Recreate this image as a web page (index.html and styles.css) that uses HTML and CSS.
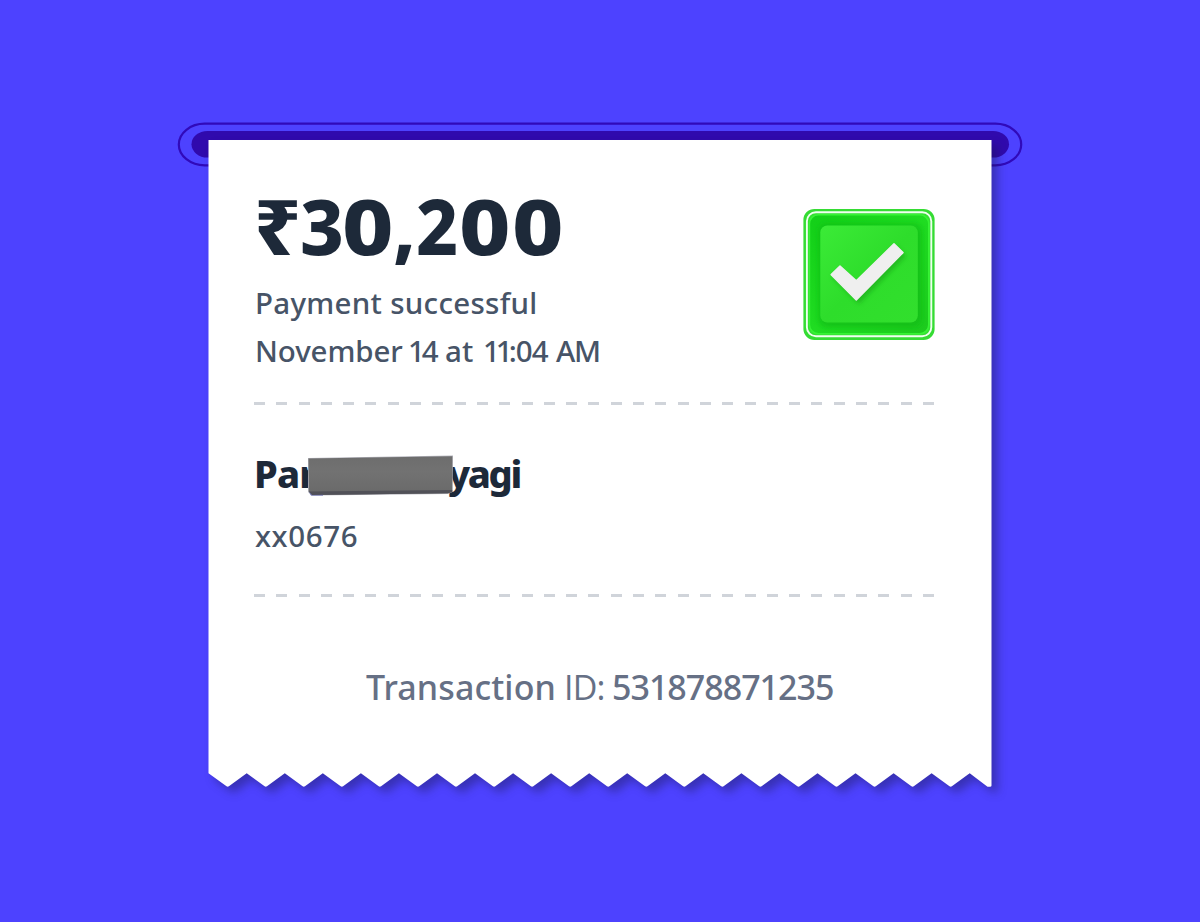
FILE: index.html
```
<!DOCTYPE html>
<html lang="en">
<head>
<meta charset="utf-8">
<title>Payment receipt</title>
<link rel="stylesheet" href="styles.css">
</head>
<body>
<main class="stage">
  <svg class="backdrop" viewBox="0 0 1200 922" aria-hidden="true">
    <rect class="slot-ring" x="178.8" y="123.7" width="842.4" height="41.6" rx="26" ry="20.8"/>
    <rect class="slot" x="191.5" y="131" width="817.5" height="26.5" rx="16" ry="13.2"/>
    <path class="paper" d="M208.5 140H991.5V785.5Q991.5 786.7 990 786.7H987.5L969.7 773.2L951.9 786.2Q950.7 787.1 949.5 786.2L931.6 773.2L913.8 786.2Q912.6 787.1 911.4 786.2L893.6 773.2L875.8 786.2Q874.6 787.1 873.4 786.2L855.5 773.2L837.7 786.2Q836.5 787.1 835.3 786.2L817.5 773.2L799.7 786.2Q798.5 787.1 797.3 786.2L779.4 773.2L761.6 786.2Q760.4 787.1 759.2 786.2L741.4 773.2L723.6 786.2Q722.4 787.1 721.2 786.2L703.3 773.2L685.5 786.2Q684.3 787.1 683.1 786.2L665.3 773.2L647.5 786.2Q646.3 787.1 645.1 786.2L627.2 773.2L609.4 786.2Q608.2 787.1 607 786.2L589.2 773.2L571.4 786.2Q570.2 787.1 569 786.2L551.1 773.2L533.3 786.2Q532.1 787.1 530.9 786.2L513.1 773.2L495.3 786.2Q494.1 787.1 492.9 786.2L475 773.2L457.2 786.2Q456 787.1 454.8 786.2L437 773.2L419.2 786.2Q418 787.1 416.8 786.2L398.9 773.2L381.1 786.2Q379.9 787.1 378.7 786.2L360.9 773.2L343.1 786.2Q341.9 787.1 340.7 786.2L322.8 773.2L305 786.2Q303.8 787.1 302.6 786.2L284.8 773.2L267 786.2Q265.8 787.1 264.6 786.2L246.7 773.2L228.9 786.2Q227.7 787.1 226.5 786.2L208.5 773.2Z"/>
  </svg>
  <article class="receipt">
    <header class="summary">
      <div class="details">
        <h1 class="amount"><span class="g rupee">₹</span><span class="g three">3</span><span class="g zero">0</span><span class="g comma">,</span><span class="g two">2</span><span class="g zero wide">0</span><span class="g zero">0</span></h1>
        <p class="status">Payment successful</p>
        <p class="date"><span class="month">November </span><span class="day">14 </span><span class="at">at </span><span class="time"><span class="hour">11</span>:04 </span><span class="meridiem">AM</span></p>
      </div>
      <svg class="badge" viewBox="0 0 132 132" aria-hidden="true">
        <defs>
          <linearGradient id="well" x1="0" y1="0" x2="1" y2="1"><stop offset="0" stop-color="#13cf18"/><stop offset=".5" stop-color="#20dc22"/><stop offset="1" stop-color="#1dc91e"/></linearGradient>
          <linearGradient id="tile" x1="0" y1="0" x2="1" y2="1"><stop offset="0" stop-color="#3beb37"/><stop offset=".5" stop-color="#2edd2b"/><stop offset="1" stop-color="#32df2d"/></linearGradient>
          <filter id="soft" x="-20%" y="-20%" width="140%" height="140%"><feGaussianBlur stdDeviation="2.3"/></filter>
        </defs>
        <rect x=".4" y=".9" width="131.2" height="131" rx="11" fill="#35dc33"/>
        <rect x="3.9" y="4.2" width="124.4" height="124" rx="9" fill="none" stroke="#effff0" stroke-width="1.9"/>
        <rect x="6.4" y="6.7" width="119.4" height="119" rx="9" fill="url(#well)" stroke="#36f334" stroke-width="1.6"/>
        <rect x="14" y="14" width="106" height="106" rx="9" fill="#0fbd13" opacity=".45" filter="url(#soft)"/>
        <rect x="18" y="18" width="99" height="100" rx="8" fill="#17b817" opacity=".4" filter="url(#soft)"/>
        <rect x="17.3" y="17.5" width="97.5" height="97" rx="7" fill="url(#tile)"/>
        <path d="M29 69l8-7 17 15L93 38l10 10-47 48z" fill="#159719" opacity=".5" filter="url(#soft)"/>
        <path d="M28.2 66.6L37 58L53.3 72.9L91 35.8L100 44.6L53.3 92Z" fill="#efefef" stroke="#efefef" stroke-width="1.5" stroke-linejoin="round"/>
      </svg>
    </header>
    <div class="divider"></div>
    <section class="payee">
      <h2 class="name">Par<span class="redaction"><svg viewBox="0 0 150 44" aria-hidden="true"><defs><linearGradient id="bar" x1="0" y1="0" x2="0" y2="1"><stop offset="0" stop-color="#6d6d6d"/><stop offset=".4" stop-color="#727272"/><stop offset="1" stop-color="#696969"/></linearGradient></defs><path d="M2 4L147 1.5L146.5 38L142 40L6 41.5L2 38Z" fill="#b4b4bc"/><path d="M2.5 4.6L146.3 2.2V38L142 39.2L6 41L2.8 37.5Z" fill="url(#bar)"/><path d="M2.8 37.5L146.2 36V38L142 39.2L6 41Z" fill="#515158"/><path d="M2.8 37.8L6 41L17 40.8V41.4H5Z" fill="#5359a4"/></svg></span><span class="surname">yagi</span></h2>
      <p class="account">xx0676</p>
    </section>
    <div class="divider"></div>
    <p class="transaction"><span class="label">Transaction </span><span class="id">ID: </span><span class="number">531878871235</span></p>
  </article>
</main>
</body>
</html>
```

FILE: styles.css
```
* { box-sizing: border-box; }
body {
  margin: 0;
  background: #4d42ff;
  font-family: "Noto Sans", sans-serif;
  color: #1d2939;
}
h1, h2, p { margin: 0; white-space: nowrap; }
.stage {
  position: relative;
  width: 1200px;
  height: 922px;
  padding: 140px 208px 135px;
  overflow: hidden;
}
.backdrop { position: absolute; inset: 0; width: 1200px; height: 922px; }
.slot { fill: #300aad; }
.slot-ring { fill: none; stroke: #300aba; stroke-width: 2.2; }
.paper { fill: #fff; filter: drop-shadow(6px 6px 5px rgba(20, 20, 60, .38)); }
.receipt {
  position: relative;
  display: flex;
  flex-direction: column;
  height: 647px;
  padding: 45px 56px 0 46px;
}
.summary { display: flex; justify-content: space-between; height: 217px; }
.details { display: flex; flex-direction: column; }
.badge { width: 132px; height: 132px; margin: 23px 1px 0 0; }
.amount {
  display: flex;
  height: 94px;
  line-height: 80px;
  font-size: 77.5px;
  font-weight: 800;
}
.g { display: block; transform-origin: left center; }
.rupee { width: 46px; transform: scaleX(1.06); }
.three { width: 42px; transform: scaleX(.98); }
.zero { width: 51px; transform: scaleX(1.15); }
.comma { width: 23px; }
.two { width: 43px; transform: scaleX(.94); }
.wide { width: 53px; }
.status, .date, .account, .transaction { font-weight: 500; }
.status, .date, .account { color: #475467; font-size: 29.5px; line-height: 48px; }
.status { letter-spacing: .3px; padding-left: 1px; }
.date { display: flex; padding-left: 1px; }
.month { width: 153px; letter-spacing: -.1px; }
.day { width: 37px; letter-spacing: -3px; }
.at { width: 38px; letter-spacing: .2px; }
.time { width: 73px; letter-spacing: -.9px; }
.hour { letter-spacing: -4px; }
.meridiem { letter-spacing: -1.2px; }
.divider {
  flex: none;
  height: 3px;
  width: 681px;
  background: repeating-linear-gradient(90deg, #d0d4da 0 11px, transparent 11px 22.3px);
}
.payee { height: 189px; padding-top: 41px; }
.name {
  display: flex;
  align-items: center;
  height: 54px;
  font-size: 38px;
  font-weight: 800;
  line-height: 54px;
  letter-spacing: -.9px;
}
.redaction { display: block; flex: none; width: 142px; height: 44px; margin: 6px 0 0 -10px; position: relative; z-index: 1; }
.redaction svg { display: block; width: 150px; height: 44px; }
.surname { letter-spacing: -2.3px; }
.account { padding-top: 12px; padding-left: 1px; letter-spacing: .6px; }
.transaction {
  display: flex;
  padding: 66px 0 0 112px;
  font-size: 34px;
  line-height: 48px;
  color: #667085;
}
.label { width: 198px; letter-spacing: .1px; }
.id { width: 48px; font-family: "Open Sans", sans-serif; letter-spacing: -.8px; }
.number { letter-spacing: -1px; }
```
